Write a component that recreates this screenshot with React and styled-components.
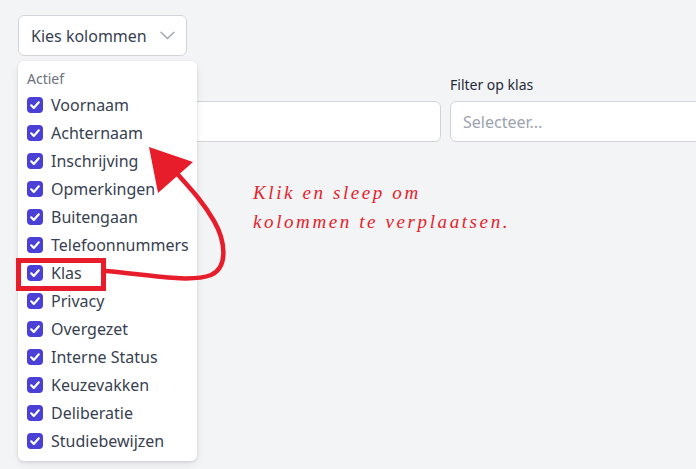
import React from 'react';
import styled, { createGlobalStyle } from 'styled-components';

const GlobalStyle = createGlobalStyle`
  html, body {
    margin: 0;
    padding: 0;
    background: #f3f4f6;
    overflow: hidden;
  }
  body {
    font-family: "Noto Sans", "Open Sans", sans-serif;
    color: #374151;
  }
`;

const columns = [
  'Voornaam',
  'Achternaam',
  'Inschrijving',
  'Opmerkingen',
  'Buitengaan',
  'Telefoonnummers',
  'Klas',
  'Privacy',
  'Overgezet',
  'Interne Status',
  'Keuzevakken',
  'Deliberatie',
  'Studiebewijzen',
];

const Page = styled.div`
  position: relative;
  width: 696px;
  height: 469px;
  padding: 15px 18px;
  box-sizing: border-box;
`;

const PickerWrap = styled.div`
  position: relative;
  width: 169px;
`;

const PickerButton = styled.button`
  display: flex;
  align-items: center;
  justify-content: space-between;
  width: 169px;
  height: 41px;
  padding: 0 11px 0 12px;
  box-sizing: border-box;
  background: #fff;
  border: 1px solid #d1d5db;
  border-radius: 6px;
  font-family: inherit;
  font-size: 16px;
  color: #374151;
  cursor: pointer;
`;

const Panel = styled.div`
  position: absolute;
  top: 46px;
  left: 0;
  z-index: 5;
  width: 179px;
  height: 400px;
  box-sizing: border-box;
  padding: 8px 0 0 9px;
  background: #fff;
  border-radius: 6px;
  box-shadow: 0 1px 3px rgba(0, 0, 0, 0.12), 0 4px 10px rgba(0, 0, 0, 0.06);
`;

const GroupLabel = styled.div`
  font-size: 14px;
  line-height: 20px;
  color: #6b7280;
  margin-bottom: 2px;
`;

const Option = styled.label`
  display: flex;
  align-items: center;
  gap: 8px;
  height: 28px;
  font-size: 16px;
  color: #374151;
  white-space: nowrap;
`;

const FilterRow = styled.div`
  display: grid;
  grid-template-columns: 423px 423px;
  column-gap: 9px;
  margin-top: 19px;
`;

const Field = styled.div`
  display: flex;
  flex-direction: column;
  gap: 6px;
`;

const FieldLabel = styled.span`
  min-height: 20px;
  font-size: 14px;
  line-height: 20px;
  color: #1f2937;
`;

const Input = styled.div`
  height: 41px;
  box-sizing: border-box;
  padding: 0 12px;
  display: flex;
  align-items: center;
  background: #fff;
  border: 1px solid #d1d5db;
  border-radius: 6px;
  font-size: 16px;
  color: #9ca3af;
`;

const Overlay = styled.svg`
  position: absolute;
  inset: 0;
  z-index: 10;
  pointer-events: none;
`;

const Note = styled.div`
  position: absolute;
  left: 253px;
  top: 178px;
  z-index: 10;
  font-family: "Liberation Serif", serif;
  font-style: italic;
  font-size: 19px;
  line-height: 29px;
  letter-spacing: 2.6px;
  color: #e71d2b;
`;

const Chevron = () => (
  <svg width="15" height="9" viewBox="0 0 15 9" fill="none">
    <path d="M1 1.2l6.5 6.3 6.5-6.3" stroke="#9ca3af" strokeWidth="1.3" strokeLinecap="round" strokeLinejoin="round" />
  </svg>
);

const Check = () => (
  <svg width="16" height="16" viewBox="0 0 16 16">
    <rect width="16" height="16" rx="4" fill="#4a40d6" />
    <path d="M4.2 8.3l2.6 2.6 5-5.6" fill="none" stroke="#fff" strokeWidth="2.2" strokeLinecap="round" strokeLinejoin="round" />
  </svg>
);

const App = () => {
  return (
    <>
      <GlobalStyle />
      <Page>
        <PickerWrap>
          <PickerButton>
            Kies kolommen
            <Chevron />
          </PickerButton>
          <Panel>
            <GroupLabel>Actief</GroupLabel>
            {columns.map((c) => (
              <Option key={c}>
                <Check />
                {c}
              </Option>
            ))}
          </Panel>
        </PickerWrap>

        <FilterRow>
          <Field>
            <FieldLabel />
            <Input />
          </Field>
          <Field>
            <FieldLabel>Filter op klas</FieldLabel>
            <Input>Selecteer...</Input>
          </Field>
        </FilterRow>

        <Overlay width="696" height="469" viewBox="0 0 696 469">
          <rect x="18.5" y="260.5" width="85" height="28" fill="none" stroke="#e71d2b" strokeWidth="5" />
          <path
            d="M106 271 C 150 275, 190 283, 211 275 C 229 267, 225 240, 214 221 C 202 200, 188 186, 172 168"
            fill="none"
            stroke="#e71d2b"
            strokeWidth="4.5"
            strokeLinecap="round"
          />
          <polygon points="149,147 193,162 158,193" fill="#e71d2b" />
        </Overlay>
        <Note>
          Klik en sleep om
          <br />
          kolommen te verplaatsen.
        </Note>
      </Page>
    </>
  );
};

export default App;
